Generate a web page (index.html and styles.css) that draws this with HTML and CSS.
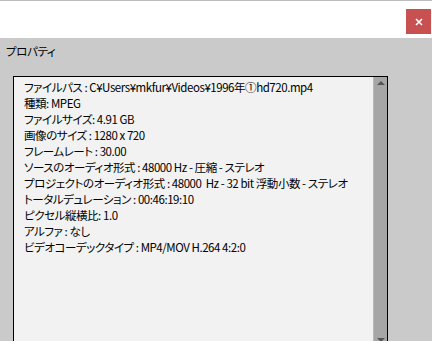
FILE: index.html
```html
<!DOCTYPE html>
<html lang="ja">
<head>
  <meta charset="UTF-8" />
  <title>プロパティ</title>
  <link rel="stylesheet" href="styles.css">
</head>
<body>
  <div class="titlebar">
    <button class="close" aria-label="閉じる">
      <svg width="10" height="10" viewBox="0 0 10 10"><path d="M2 2L8 8M8 2L2 8" stroke="#fff" stroke-width="1.6"/></svg>
    </button>
  </div>
  <div class="main">
    <div class="heading">プロパティ</div>
    <div class="panel">
      <div class="info">
        <div>ファイルパス : C¥Users¥mkfur¥Videos¥1996年①hd720.mp4</div>
        <div>種類: MPEG</div>
        <div>ファイルサイズ: 4.91 GB</div>
        <div>画像のサイズ : 1280 x 720</div>
        <div>フレームレート : 30.00</div>
        <div>ソースのオーディオ形式 : 48000 Hz - 圧縮 - ステレオ</div>
        <div>プロジェクトのオーディオ形式 : 48000 &nbsp;Hz - 32 bit 浮動小数 - ステレオ</div>
        <div>トータルデュレーション : 00:46:19:10</div>
        <div>ピクセル縦横比: 1.0</div>
        <div>アルファ : なし</div>
        <div>ビデオコーデックタイプ : MP4/MOV H.264 4:2:0</div>
      </div>
      <div class="scrollbar">
        <span class="arrow up"></span>
        <span class="arrow down"></span>
      </div>
    </div>
  </div>
</body>
</html>
```

FILE: styles.css
```css
:root {
  --gray: #cacaca;
  --panel: #f2f2f2;
  --track: #a6a6a6;
  --text: #000000;
  --close: #c75050;
}

* {
  box-sizing: border-box;
}

html,
body {
  margin: 0;
  height: 341px;
  overflow: hidden;
}

body {
  font-family: "Noto Sans CJK JP", "Noto Sans", sans-serif;
  font-size: 11.5px;
  font-feature-settings: "palt";
  color: var(--text);
  background-color: var(--gray);
  display: flex;
  flex-direction: column;
}

.titlebar {
  height: 38px;
  background-color: #ffffff;
  border-top: 1px solid #bcbcbc;
  display: flex;
  justify-content: flex-end;
  align-items: flex-start;
  padding-top: 8px;
  padding-right: 1px;
}

.close {
  width: 25px;
  height: 25px;
  border: none;
  padding: 0;
  background-color: var(--close);
  display: flex;
  align-items: center;
  justify-content: center;
}

.main {
  flex: 1;
  display: flex;
  flex-direction: column;
  padding-left: 6px;
}

.heading {
  line-height: 16px;
  margin-top: 5px;
  letter-spacing: -0.4px;
}

.panel {
  flex: 1;
  margin-top: 17px;
  margin-left: 7px;
  width: 375px;
  background-color: var(--panel);
  border: 1px solid #000000;
  border-bottom: none;
  display: flex;
}

.info {
  flex: 1;
  padding: 2px 0 0 10px;
  line-height: 16px;
  letter-spacing: -0.45px;
  white-space: nowrap;
}

.scrollbar {
  width: 14px;
  background-color: var(--track);
  border-left: 1px solid #b8b8b8;
  display: flex;
  flex-direction: column;
  justify-content: space-between;
  align-items: center;
  padding: 4px 0 0;
}

.arrow {
  width: 0;
  height: 0;
  border-left: 4px solid transparent;
  border-right: 4px solid transparent;
}

.arrow.up {
  border-bottom: 4px solid #555555;
}

.arrow.down {
  border-top: 4px solid #555555;
  margin-bottom: -1px;
}
```
